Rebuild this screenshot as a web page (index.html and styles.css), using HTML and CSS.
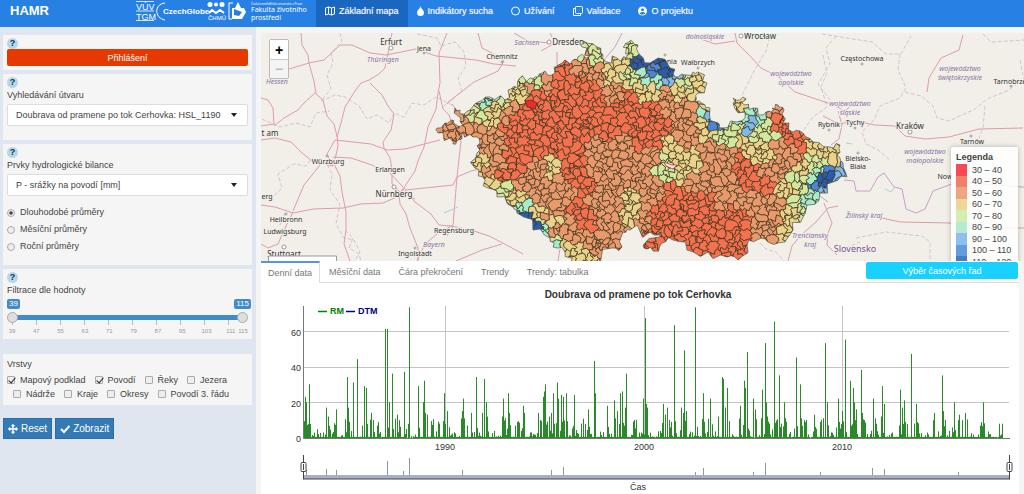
FILE: index.html
```html
<!DOCTYPE html>
<html lang="cs">
<head>
    <meta charset="UTF-8">
    <meta name="viewport" content="width=device-width, initial-scale=1.0">
    <title>HAMR</title>
    <link rel="stylesheet" href="styles.css">
</head>
<body>

<header class="navbar">
    <a class="brand" href="#">HAMR</a>
    <svg class="logos" width="180" height="24" viewBox="0 0 180 24" fill="none" stroke="#fff" aria-label="Partneři">
        <path d="M0 1.500h18M0 11h18M0 20.500h18" stroke-width=".8"/>
        <g fill="#fff" stroke="none">
            <text x="0" y="10" font-size="9">VÚV</text>
            <text x="0" y="20" font-size="9">TGM</text>
            <text x="27" y="14" font-size="8" font-weight="bold">CzechGlobe</text>
            <text x="72" y="20" font-size="6">ČHMÚ</text>
        </g>
        <path d="M29 3C18 4 18 18 29 20"/>
        <g fill="#fff" stroke="none"><circle cx="74" cy="4.500" r="2.500"/><circle cx="80" cy="4.500" r="2"/><circle cx="86" cy="4.500" r="2.500"/></g>
        <path d="M73 13l3-3 4 3 4-3 4 3" stroke-width="2"/>
        <path d="M97 3h-4v16h3"/>
        <path d="M96 8h3l3-6 3 6h3l2 4-4 7H96z" fill="#fff" stroke="none"/>
        <path d="M98 9l8 3-3 4-5-1z" fill="#2780e3" stroke="none"/>
        <g class="faculty" fill="#fff" stroke="none">
            <text x="115" y="5" font-size="3">Česká zemědělská univerzita v Praze</text>
            <text x="115" y="12" font-size="7">Fakulta životního</text>
            <text x="115" y="20" font-size="7">prostředí</text>
        </g>
    </svg>
    <nav class="menu">
        <a class="active" href="#">
            <svg width="10" height="10" viewBox="0 0 10 10" fill="none" stroke="currentColor"><path d="M.5 2l3-1 3 1 3-1v7l-3 1-3-1-3 1zM3.500 1v7M6.500 2v7"/></svg>
            Základní mapa
        </a>
        <a href="#">
            <svg width="7" height="10" viewBox="0 0 7 10" fill="currentColor"><path d="M3.500 0C4 3 7 4 7 6.500a3.500 3.500 0 0 1-7 0C0 4 3 3 3.500 0z"/></svg>
            Indikátory sucha
        </a>
        <a href="#">
            <svg width="9" height="10" viewBox="0 0 9 10" fill="none" stroke="currentColor"><circle cx="4.500" cy="5" r="4"/></svg>
            Užívání
        </a>
        <a href="#">
            <svg width="10" height="10" viewBox="0 0 10 10" fill="none" stroke="currentColor"><rect x="2.500" y=".5" width="7" height="7" rx="1"/><path d="M2 2.500H.5v7h7V8"/></svg>
            Validace
        </a>
        <a href="#">
            <svg width="9" height="10" viewBox="0 0 9 10"><circle cx="4.500" cy="5" r="4.500" fill="currentColor"/><circle cx="4.500" cy="3.800" r="1.500" fill="#2780e3"/><path d="M1.800 7.500C2.500 5.500 6.500 5.500 7.200 7.500 6 9 3 9 1.800 7.500z" fill="#2780e3"/></svg>
            O projektu
        </a>
    </nav>
</header>

<div class="page">
    <form class="sidebar">
        <section class="well">
            <button type="button" class="help">?</button>
            <button type="button" class="login">Přihlášení</button>
        </section>

        <section class="well">
            <button type="button" class="help">?</button>
            <label class="title" for="utvar">Vyhledávání útvaru</label>
            <div class="picker">
                <select id="utvar"><option>Doubrava od pramene po tok Cerhovka: HSL_1190</option></select>
            </div>
        </section>

        <section class="well">
            <button type="button" class="help">?</button>
            <label class="title" for="prvek">Prvky hydrologické bilance</label>
            <div class="picker">
                <select id="prvek"><option>P - srážky na povodí [mm]</option></select>
            </div>
            <div class="radios">
                <label><input type="radio" name="obdobi" checked>Dlouhodobé průměry</label>
                <label><input type="radio" name="obdobi">Měsíční průměry</label>
                <label><input type="radio" name="obdobi">Roční průměry</label>
            </div>
        </section>

        <section class="well">
            <button type="button" class="help">?</button>
            <div class="title">Filtrace dle hodnoty</div>
            <div class="slider">
                <div class="values"><output>39</output><output>115</output></div>
                <div class="track">
                    <input type="range" min="39" max="115" value="39" aria-label="Od">
                    <input type="range" min="39" max="115" value="115" aria-label="Do">
                </div>
                <div class="ticks"></div>
                <div class="scale">
                    <span>39</span><span>47</span><span>55</span><span>63</span><span>71</span><span>79</span><span>87</span><span>95</span><span>103</span><span>111</span><span>115</span>
                </div>
            </div>
        </section>

        <section class="well layers">
            <div class="title">Vrstvy</div>
            <div class="checks">
                <label><input type="checkbox" checked>Mapový podklad</label>
                <label><input type="checkbox" checked>Povodí</label>
                <label><input type="checkbox">Řeky</label>
                <label><input type="checkbox">Jezera</label>
            </div>
            <div class="checks second">
                <label><input type="checkbox">Nádrže</label>
                <label><input type="checkbox">Kraje</label>
                <label><input type="checkbox">Okresy</label>
                <label><input type="checkbox">Povodí 3. řádu</label>
            </div>
        </section>

        <div class="actions">
            <button type="button">
                <svg width="10" height="10" viewBox="0 0 10 10" fill="none" stroke="currentColor" stroke-width="1.300"><path d="M5 1v8M1 5h8M3.500 2.200L5 .8l1.500 1.400M3.500 7.800L5 9.200l1.500-1.400M2.200 3.500L.8 5l1.400 1.500M7.800 3.500L9.200 5 7.800 6.500"/></svg>
                Reset
            </button>
            <button type="button">
                <svg width="10" height="10" viewBox="0 0 10 10" fill="none" stroke="currentColor" stroke-width="2"><path d="M1 5l3 3 5.500-6"/></svg>
                Zobrazit
            </button>
        </div>
    </form>

    <main class="content">
        <div class="map">
            <svg id="map" viewBox="261 33 763 228" preserveAspectRatio="xMinYMin slice" aria-label="Mapa povodí">
                <g class="borders">
                    <path d="M340 33l2 8-11 12 2 10-6 12 4 14-10 12 14-6 10 2 14 9 8 13 10-4 12 8 5-10 10 4 8-14 12 2 12-8 16 8"/>
                    <path d="M417 34l20 4 4 8 14-4 9 10 2 14-8 12 4 14-12 8-8 8"/>
                    <path d="M270 200l12-12-4-14 16-10 12 2 6-8 14 4 6 12-2 16 10 14-4 20 8 14 10 2 6 12-7 12 2 10"/>
                    <path d="M262 119l18 8 16-4 14 4 6-14 14-2"/>
                    <path d="M836 36l-10 12 4 16-12 20 12 16M822 34l50 8 14 12 15 0 10-18M900 54l-2 16 8 18-6 10-20 8-6 14-12 12 4 12 12 6 12 10"/>
                    <path d="M905 92l16 4 12 10 4 12 12 3 26-12 12-10 20-8 17-12M985 106l-2 22-8 20M1020 60l4 20M983 34l8 8 33-2"/>
                    <path d="M742 95l12-24 12-20 5-18M823 55l4 18-6 14 6 20-14 10-10 14M856 238l30-6 36 4 8 6 0 19M760 243l6 6 10 3 8 9M846 248l14-6"/>
                    <path d="M345 230l8 8-4 10 10 6 2 7"/>
                </g>
                <g class="roads">
                    <path d="M301 33l1 12 6 10 1 8 15-3 16-15 12 0 18 8 16 2 30-6 20 7 40 4 18 4 22 2M309 63l5 18 2 13 7 6 4 16 7 8 3 12 1 10-4 18 6 12 2 16 4 20 0 18-2 14 6 17"/>
                    <path d="M289 69l20-6M261 98l7 2 5 8 1 16-13 2M274 126l10-8 14-8 6-7 12-11M261 140l14-2 16 4 10 10 12 10 20 4-6-12 8-14 36 4 16 6 18-1 35-9M337 137l4-14 4-16 10-16 6-8 8-3 10-6 6-6 5-24 2-11M370 83l12 12 6 11 6 8-3 16-8 12 1 6 6 10 2 12 0 14 8 8 15 7"/>
                    <path d="M447 33l-8 20 1 30-2 10-2 16-8 18-4 20-6 14-3 10-10 15-6 8 1 10 6 10 4 14 8 20 0 13M333 157l18 1 18 6 20 8 14 15M320 165l-16 20-11 26M261 205l14 2 18 6 20-4 30-1 18-4 22-1 14-6 8-9M293 212l-8 16-7 16-10 4-7-4"/>
                    <path d="M405 190l20-2 28-3 4-8 14-6 20-4M405 190l10 12 16 12 8 11 12 1 20 4 18 6 12 6 22 12M457 177l4-36-8-14-4-12-6-6-4-18M457 177l-2 24-2 24-16 9-12 10-8 17M502 244l-20 6-26 11M453 226l-6 10"/>
                    <path d="M478 33l4 15 10 5 12 8-6 10-24 11-18 14-9 8M514 33l14 8 22 2M557 52l0 12 2 8M550 33l5 10-14 8M558 261l2-12"/>
                    <path d="M735 33l2 10 14 14 10 11 16 8 18 16 24 8 12 4 14 7 11-10M838 111l4 14-3 14-8 6M823 116l16 8 16-3 20 4 20 1 10 10 20 3 24-2 30-8 44-1"/>
                    <path d="M963 35l-4 15-18 8-12 20-2 14M735 41l-20 3-17-6M838 206l-10 2-12 14-16 14-8 10-4 15M824 203l8 20-4 10-1 12 10 10M882 218l18 4 50 1 24 5 50 0"/>
                </g>
                <g class="frontier">
                    <path d="M622 33l-7 14-12 14M452 104l6 8 4 10M820 196l8 6M844 180l10 1 2 10 14 0 8-14 6-4 10 14 8 2 4 20 10 4 9-4 8-18 16-6 10-3 76 6"/>
                </g>
                <g class="water"><path d="M885 189l6 3 4-5M846 143l6 1M280 225l5-12M444 213l14-6"/></g>
                <g class="dots">
                    <circle cx="391" cy="48" r="2"/><circle cx="424" cy="53" r="1"/><circle cx="502" cy="62" r="1"/><circle cx="327" cy="156" r="1"/>
                    <circle cx="394" cy="187" r="2"/><circle cx="284" cy="247" r="2"/><circle cx="415" cy="248" r="1"/><circle cx="549" cy="42" r="2"/>
                    <circle cx="741" cy="36" r="2"/><circle cx="910" cy="132" r="2"/><circle cx="862" cy="64" r="1"/><circle cx="971" cy="136" r="1"/>
                    <circle cx="1011" cy="86" r="1"/><circle cx="858" cy="153" r="1"/><circle cx="665" cy="55" r="1"/><circle cx="698" cy="68" r="1"/>
                    <circle cx="855" cy="128" r="1"/><circle cx="829" cy="130" r="1"/><circle cx="286" cy="214" r="1"/>
                </g>
                <g class="places">
                    <g class="region">
                        <text x="383" y="62">Thüringen</text><text x="277" y="84">Hessen</text><text x="434" y="247">Bayern</text>
                        <text x="527" y="45">Sachsen</text><text x="705" y="39">dolnośląskie</text>
                        <text x="791" y="76">województwo</text><text x="791" y="85">opolskie</text>
                        <text x="850" y="106">województwo</text><text x="850" y="115">śląskie</text>
                        <text x="960" y="71">województwo</text><text x="960" y="80">świętokrzyskie</text>
                        <text x="925" y="154">województwo</text><text x="925" y="163">małopolskie</text>
                        <text x="864" y="218">Žilinský kraj</text><text x="810" y="238">Trenčiansky</text><text x="810" y="247">kraj</text>
                    </g>
                    <g class="city">
                        <text x="391" y="45">Erfurt</text><text x="394" y="197">Nürnberg</text><text x="284" y="257">Stuttgart</text>
                        <text x="568" y="45">Dresden</text><text x="760" y="39">Wrocław</text><text x="910" y="129">Kraków</text>
                        <text x="270" y="136">t am</text>
                    </g>
                    <g class="town">
                        <text x="424" y="51">Jena</text><text x="502" y="59">Chemnitz</text><text x="328" y="164">Würzburg</text>
                        <text x="390" y="172">Erlangen</text><text x="286" y="222">Heilbronn</text><text x="285" y="234">Ludwigsburg</text>
                        <text x="454" y="233">Regensburg</text><text x="415" y="256">Ingolstadt</text><text x="267" y="199">erg</text>
                        <text x="666" y="64">Jelenia</text><text x="698" y="65">Wałbrzych</text><text x="862" y="61">Częstochowa</text>
                        <text x="829" y="127">Rybnik</text><text x="855" y="125">Tychy</text><text x="858" y="161">Bielsko-</text><text x="858" y="169">Biała</text>
                        <text x="972" y="144">Tarnów</text><text x="1010" y="84">Tarnobrze</text><text x="945" y="179">Now</text>
                    </g>
                    <text class="country" x="855" y="252">Slovensko</text>
                </g>
                <g id="basins"></g>
                <path class="scalebar" d="M268.500 262v-6h68v6"/>
            </svg>
            <div class="zoom">
                <button type="button" aria-label="Přiblížit">+</button>
                <button type="button" aria-label="Oddálit" disabled>−</button>
            </div>
            <div class="legend">
                <strong>Legenda</strong>
                <ul>
                    <li class="c0">30 – 40</li>
                    <li class="c1">40 – 50</li>
                    <li class="c2">50 – 60</li>
                    <li class="c3">60 – 70</li>
                    <li class="c4">70 – 80</li>
                    <li class="c5">80 – 90</li>
                    <li class="c6">90 – 100</li>
                    <li class="c7">100 – 110</li>
                    <li class="c8">110 – 120</li>
                </ul>
            </div>
        </div>

        <div class="panel">
            <div class="tabs">
                <a class="active" href="#">Denní data</a>
                <a href="#">Měsíční data</a>
                <a href="#">Čára překročení</a>
                <a href="#">Trendy</a>
                <a href="#">Trendy: tabulka</a>
                <button type="button" class="series">Výběr časových řad</button>
            </div>
            <svg id="chart" viewBox="261 283 758 211" aria-label="Denní data">
                <text class="heading" x="638" y="298">Doubrava od pramene po tok Cerhovka</text>
                <path class="grid" d="M303 331.500h706M303 367.500h706M303 402.500h706M445.500 306v132M644.500 306v132M842.500 306v132"/>
                <path class="axis" d="M303.500 306v132.500H1010"/>
                <path id="bars" class="bars"/>
                <g class="labels">
                    <text class="end" x="301" y="336">60</text><text class="end" x="301" y="371">40</text>
                    <text class="end" x="301" y="407">20</text><text class="end" x="301" y="442">0</text>
                    <text x="445" y="450">1990</text><text x="644" y="450">2000</text><text x="842" y="450">2010</text>
                    <text x="638" y="490">Čas</text>
                </g>
                <path d="M318 311.500h9" stroke="#008000" stroke-width="1.500"/>
                <text class="key" x="330" y="314" fill="#008000">RM</text>
                <path d="M346 311.500h9" stroke="#000080" stroke-width="1.500"/>
                <text class="key" x="358" y="314" fill="#000080">DTM</text>
                <path id="overview" class="overview"/>
                <rect x="303" y="475" width="706" height="4" fill="#a8b1c4"/>
                <path d="M303 479h707" stroke="#445" stroke-width="1"/>
                <g class="handle">
                    <path d="M303.500 455v24M1009.500 455v24"/>
                    <rect x="301" y="462.500" width="5" height="9" rx="1"/><rect x="1007" y="462.500" width="5" height="9" rx="1"/>
                    <path d="M303.500 464v6M1009.500 464v6"/>
                </g>
            </svg>
        </div>
    </main>
</div>

<script src="script.js"></script>
</body>
</html>
```
FILE: styles.css
```css
* {
    box-sizing: border-box;
}
body {
    margin: 0;
    min-height: 100vh;
    display: flex;
    flex-direction: column;
    font-family: "Liberation Sans", Arial, sans-serif;
    font-size: 9px;
    line-height: 12px;
    color: #444;
    background: #f4f5f6;
}
button, select, input {
    font: inherit;
    margin: 0;
}

/* top bar */
.navbar {
    display: flex;
    align-items: flex-start;
    height: 27px;
    background: #2780e3;
    color: #fff;
}
.navbar a {
    color: #fff;
    text-decoration: none;
}
.brand {
    width: 126px;
    padding: 5px 0 0 10px;
    font-size: 13px;
    font-weight: bold;
}
.logos {
    margin-left: 10px;
}
.faculty {
    font-family: "Noto Sans", sans-serif;
}
.menu {
    display: flex;
    height: 100%;
}
.menu a {
    display: flex;
    align-items: center;
    gap: 4px;
    padding: 0 9px 6px;
    font-size: 9px;
    text-shadow: 0 0 1px rgba(255, 255, 255, 0.5);
}
.menu a.active {
    background: #1967be;
}

.page {
    flex: 1;
    display: grid;
    grid-template-columns: 25% 1fr;
}

/* sidebar */
.sidebar {
    display: flex;
    flex-direction: column;
    gap: 4px;
    padding: 8px 4px 8px 3px;
    background: #dfe6f0;
}
.well {
    padding: 3px 4px 4px;
    background: #f5f5f5;
}
.help {
    display: block;
    width: 11px;
    height: 11px;
    padding: 0;
    border: 0;
    border-radius: 50%;
    background: #b5d8e8;
    color: #135;
    font-size: 9px;
    font-weight: bold;
    line-height: 11px;
}
.login {
    display: block;
    width: 100%;
    height: 17px;
    padding: 0;
    border: 0;
    border-radius: 2px;
    background: #e63900;
    color: #fff;
}
.title {
    display: block;
    line-height: 14px;
}
.picker {
    position: relative;
    margin: 2px 0 10px;
}
.picker::after {
    content: "";
    position: absolute;
    right: 11px;
    top: 9px;
    border: 3px solid transparent;
    border-top: 4px solid #222;
    border-bottom: 0;
}
.picker select {
    display: block;
    width: 100%;
    height: 22px;
    padding: 0 8px;
    border: 1px solid #ddd;
    border-radius: 2px;
    background: #fff;
    color: #444;
    appearance: none;
}
.radios {
    display: grid;
    margin-top: -2px;
    padding-bottom: 6px;
}
.radios label {
    display: flex;
    align-items: center;
    gap: 5px;
    line-height: 17px;
}
input[type="radio"], input[type="checkbox"] {
    appearance: none;
    width: 8px;
    height: 8px;
    border: 1px solid #aaa;
    background: #eee;
}
input[type="radio"] {
    border-radius: 50%;
}
input[type="radio"]:checked {
    background: radial-gradient(#444 30%, #eee 50%);
}
input[type="checkbox"] {
    border-radius: 1px;
}
input[type="checkbox"]:checked::after {
    content: "";
    display: block;
    width: 3px;
    height: 6px;
    margin: -1px 0 0 2px;
    border: solid #222;
    border-width: 0 1px 1px 0;
    transform: rotate(40deg);
}

/* value slider */
.values {
    display: flex;
    justify-content: space-between;
    margin: 2px -3px 0 0;
}
.values output {
    padding: 0 2px;
    border-radius: 2px;
    background: #428bca;
    color: #fff;
    font-size: 8px;
    line-height: 10px;
}
.track {
    position: relative;
    height: 5px;
    margin: 6px 5px 0;
    background: #428bca;
}
.track input {
    position: absolute;
    left: -5px;
    top: -3px;
    width: calc(100% + 10px);
    height: 11px;
    appearance: none;
    background: none;
    pointer-events: none;
}
.track input::-webkit-slider-thumb {
    appearance: none;
    width: 11px;
    height: 11px;
    border: 1px solid #aaa;
    border-radius: 50%;
    background: #dedede;
    pointer-events: auto;
}
.ticks {
    height: 5px;
    margin: 0 5px;
    background: repeating-linear-gradient(90deg, #bbb 0 1px, transparent 1px 24px);
}
.scale {
    display: grid;
    grid-template-columns: repeat(9, 2fr) 1fr 0;
    margin: 2px 5px 0;
    color: #999;
    font-size: 6px;
    line-height: 8px;
}
.scale span {
    width: 20px;
    margin-left: -10px;
    text-align: center;
}

.layers {
    margin-top: 11px;
}
.checks {
    display: flex;
    gap: 9px;
    margin-top: 2px;
}
.checks.second {
    margin: 0 0 0 6px;
}
.checks label {
    display: flex;
    align-items: center;
    gap: 5px;
    line-height: 14px;
}
.actions {
    display: flex;
    gap: 3px;
    margin-top: 9px;
}
.actions button {
    display: flex;
    align-items: center;
    gap: 3px;
    height: 21px;
    padding: 0 4px;
    border: 1px solid #2e6da4;
    background: #337ab7;
    color: #fff;
    font-size: 10px;
}

/* map */
.content {
    display: flex;
    flex-direction: column;
    min-width: 0;
    padding: 6px 0 0 5px;
}
.map {
    position: relative;
    flex: 1;
    min-height: 228px;
    overflow: hidden;
    background: #f2efe9;
}
#map {
    position: absolute;
    width: 100%;
    height: 100%;
}
.borders, .roads, .frontier, .water {
    fill: none;
    stroke-linejoin: round;
}
.borders {
    stroke: #d5c3d0;
    stroke-dasharray: 4 2;
}
.roads {
    stroke: #dd9cac;
}
.frontier {
    stroke: #c8a0cc;
}
.water {
    stroke: #a5d3da;
}
#basins path {
    stroke: #3d3018;
    stroke-width: .7;
}
#basins .outline {
    fill: none;
    stroke: #555;
}
.places {
    font-family: "Noto Sans", sans-serif;
    text-anchor: middle;
    fill: #333;
    stroke: #f2efe9;
    stroke-width: 2;
    paint-order: stroke;
}
.town {
    font-size: 7px;
}
.city {
    font-size: 8px;
}
.region {
    font-size: 7px;
    font-style: italic;
    fill: #8a72a5;
}
.country {
    font-size: 9px;
    fill: #7a5494;
}
.dots {
    fill: #fff;
    stroke: #777;
    stroke-width: .7;
}
.scalebar {
    fill: #fff;
    stroke: #999;
}
.zoom {
    position: absolute;
    left: 8px;
    top: 6px;
    border: 1px solid #bbb;
    border-radius: 2px;
}
.zoom button {
    display: block;
    width: 18px;
    height: 19px;
    padding: 0;
    border: 0;
    background: #fff;
    color: #000;
    font-size: 14px;
    font-weight: bold;
}
.zoom button:disabled {
    border-top: 1px solid #ccc;
    background: #f4f4f4;
    color: #bbb;
}
.legend {
    position: absolute;
    right: 6px;
    top: 114px;
    width: 67px;
    padding: 4px 5px;
    border-radius: 2px;
    background: rgba(255, 255, 255, 0.85);
    box-shadow: 0 0 5px rgba(0, 0, 0, 0.25);
}
.legend strong {
    display: block;
}
.legend ul {
    margin: 1px 0 0;
    padding: 0;
    list-style: none;
}
.legend li {
    padding-left: 5px;
    border-left: 11px solid;
    white-space: nowrap;
}
.legend li:nth-child(even) {
    line-height: 11px;
}
.legend .c0 { border-color: #fb4856; }
.legend .c1 { border-color: #f1806b; }
.legend .c2 { border-color: #eda67f; }
.legend .c3 { border-color: #ebd898; }
.legend .c4 { border-color: #d4eeb0; }
.legend .c5 { border-color: #b4ead0; }
.legend .c6 { border-color: #8ec0ed; }
.legend .c7 { border-color: #649ddf; }
.legend .c8 { border-color: #477cc7; }

/* charts */
.panel {
    margin-right: 5px;
    background: #fff;
}
.tabs {
    display: flex;
    height: 22px;
    border-bottom: 1px solid #ddd;
}
.tabs a {
    height: 22px;
    padding: 4px 9px 0;
    border-top: 1px solid transparent;
    color: #777;
    text-decoration: none;
}
.tabs a.active {
    padding: 4px 7px 0;
    border-top: 2px solid #5b93d6;
    border-right: 1px solid #ddd;
    background: #fff;
}
.series {
    width: 152px;
    height: 17px;
    margin: 1px 1px 0 auto;
    padding: 0;
    border: 0;
    border-radius: 2px;
    background: #19d1ff;
    color: #fff;
}
#chart {
    display: block;
    width: 100%;
}
.heading {
    font-size: 10px;
    font-weight: bold;
    text-anchor: middle;
    fill: #333;
}
.grid {
    stroke: #c4c4c4;
}
.axis {
    fill: none;
    stroke: #777;
}
.bars {
    stroke: #2a8a2a;
}
.labels {
    font-size: 9px;
    text-anchor: middle;
    fill: #333;
}
.labels .end {
    text-anchor: end;
}
.key {
    font-size: 9px;
    font-weight: bold;
}
.overview {
    stroke: #8b93ad;
}
.handle {
    fill: #fff;
    stroke: #444;
}
```
FILE: script.js
```javascript
const colors = ['#ee2b30', '#f4714f', '#e99a6c', '#e9d28a', '#d3e89f', '#a5ecc9', '#7fb9ea', '#4b87d6', '#2a5cae'];

const border = [
    437,128, 445,123, 452,120, 455,124, 463,125, 461,118, 455,108, 460,110, 465,118, 470,110, 478,102, 490,97, 505,100,
    508,90, 518,88, 519,79, 530,78, 538,77, 545,71, 555,73, 562,63, 573,60, 578,57, 590,56, 582,47, 583,41, 597,47,
    603,55, 607,62, 617,58, 627,58, 630,54, 623,47, 627,43, 638,45, 640,55, 650,63, 670,68, 675,77, 685,75, 693,72,
    700,73, 707,83, 698,93, 695,102, 705,105, 710,108, 718,123, 722,128, 737,122, 745,112, 733,103, 733,98, 743,97,
    745,105, 753,108, 763,115, 773,113, 772,108, 778,105, 784,110, 783,123, 793,132, 803,133, 813,142, 830,147,
    840,145, 837,155, 843,163, 847,177, 833,182, 820,193, 807,205, 803,217, 793,230, 785,242, 768,242, 757,240,
    747,245, 738,260, 727,257, 708,252, 687,250, 673,240, 662,243, 653,251, 644,248, 645,243, 660,237, 662,232,
    650,232, 630,230, 623,232, 622,247, 612,248, 600,264, 570,264, 565,252, 553,247, 550,238, 533,230, 517,213,
    513,207, 497,197, 488,188, 483,177, 475,168, 477,153, 480,143, 473,137, 463,132, 458,140, 453,144, 450,138, 438,133
];

// sample points for each colour class, x,y pairs
const zones = [
    [],
    [540,95, 560,85, 590,90, 575,110, 530,117, 515,125, 525,145, 560,130, 600,110, 625,100, 645,110, 660,125, 640,137,
     545,150, 575,165, 580,185, 505,175, 515,160, 580,210, 750,160, 745,175, 760,185, 790,135, 670,205, 690,215, 710,235,
     660,215, 650,245, 690,240, 730,245, 740,220, 700,200, 780,126, 555,110, 585,130, 610,130, 585,222, 565,75, 740,235,
     530,105, 545,135, 510,140, 620,115, 570,150],
    [445,130, 475,125, 485,135, 490,150, 495,165, 580,65, 600,72, 615,90, 540,170, 555,185, 530,190, 550,210, 575,230,
     600,180, 620,150, 610,220, 640,180, 650,160, 660,98, 680,110, 690,140, 710,150, 720,170, 700,185, 735,195, 775,200,
     770,220, 790,160, 780,145, 590,245, 775,113, 600,150, 770,170, 725,155, 640,205, 595,205, 565,195, 500,140, 530,92,
     545,83, 760,232, 755,205, 690,120, 505,115, 620,185, 615,205, 555,232, 640,222, 650,190],
    [700,80, 680,92, 655,90, 635,85, 620,67, 607,70, 490,120, 495,107, 520,92, 478,160, 492,190, 515,200, 535,213,
     550,225, 563,240, 570,255, 550,165, 675,155, 685,165, 627,196, 632,215, 710,135, 700,118, 762,150, 765,163,
     820,150, 835,152, 800,170, 790,190, 785,215, 790,235, 738,102, 705,107, 590,260, 745,145, 480,110, 510,95],
    [590,50, 600,60, 632,48, 530,83, 543,79, 630,75, 685,82, 720,135, 735,130, 770,125, 798,185, 812,163, 536,220,
     556,238, 478,113, 500,198, 790,205, 665,165, 770,138, 755,135, 505,95],
    [487,103, 492,104, 545,73, 640,78, 655,82, 742,120, 760,118, 703,115, 560,243, 815,175, 546,229, 812,195, 520,207],
    [645,72, 750,127, 670,78, 840,170, 708,113, 837,180, 820,187],
    [650,72, 714,120, 828,170, 813,188, 518,213],
    [638,62, 648,67, 660,72, 670,72, 825,178, 524,219, 532,227]
];

function hash(a, b) {
    const s = Math.sin(a * 12.9898 + b * 78.233) * 43758.5453;
    return s - Math.floor(s);
}

// replaces a straight edge by a crooked one, the same from both sides
function crook(p, q, size) {
    const flip = p[0] > q[0] || (p[0] === q[0] && p[1] > q[1]);
    const a = flip ? q : p;
    const b = flip ? p : q;
    const points = [0.33, 0.66].map((t, i) => {
        const k = (hash(a[0] + b[0] + i, a[1] + b[1]) - 0.5) * size;
        return [a[0] + (b[0] - a[0]) * t - (b[1] - a[1]) * k, a[1] + (b[1] - a[1]) * t + (b[0] - a[0]) * k];
    });
    return flip ? points.reverse() : points;
}

function toPath(poly, size) {
    const out = [];
    poly.forEach((p, i) => {
        out.push(p, ...crook(p, poly[(i + 1) % poly.length], size));
    });
    return 'M' + out.map(p => p[0].toFixed(1) + ' ' + p[1].toFixed(1)).join('L') + 'z';
}

function classAt(x, y) {
    let best = 1e9;
    let found = 2;
    zones.forEach((list, value) => {
        for (let i = 0; i < list.length; i += 2) {
            const d = Math.hypot(x - list[i], y - list[i + 1]) + hash(x + i, y) * 4;
            if (d < best) {
                best = d;
                found = value;
            }
        }
    });
    return found;
}

function drawBasins() {
    const step = 7;
    const seeds = [];
    for (let y = 36; y < 268; y += step) {
        for (let x = 432; x < 855; x += step) {
            if (hash(x, y + 5) < 0.08) continue;
            seeds.push([x + (hash(x, y) - 0.5) * 14, y + (hash(y, x) - 0.5) * 14]);
        }
    }
    let cells = '';
    seeds.forEach(s => {
        let cell = [[s[0] - 20, s[1] - 20], [s[0] + 20, s[1] - 20], [s[0] + 20, s[1] + 20], [s[0] - 20, s[1] + 20]];
        seeds.forEach(o => {
            if (o === s || Math.abs(o[0] - s[0]) > 30 || Math.abs(o[1] - s[1]) > 30) return;
            const nx = o[0] - s[0];
            const ny = o[1] - s[1];
            const c = (o[0] * o[0] + o[1] * o[1] - s[0] * s[0] - s[1] * s[1]) / 2;
            const next = [];
            cell.forEach((p, i) => {
                const q = cell[(i + 1) % cell.length];
                const dp = p[0] * nx + p[1] * ny - c;
                const dq = q[0] * nx + q[1] * ny - c;
                if (dp <= 0) next.push(p);
                if (dp * dq < 0) {
                    const t = dp / (dp - dq);
                    next.push([p[0] + (q[0] - p[0]) * t, p[1] + (q[1] - p[1]) * t]);
                }
            });
            cell = next;
        });
        cell = cell.map(p => [Math.round(p[0] * 10) / 10, Math.round(p[1] * 10) / 10]);
        cells += `<path d="${toPath(cell, 0.8)}" fill="${colors[classAt(s[0], s[1])]}"/>`;
    });
    const outline = [];
    for (let i = 0; i < border.length; i += 2) {
        outline.push([border[i], border[i + 1]]);
    }
    const d = toPath(outline, 0.7);
    document.getElementById('basins').innerHTML = `
        <clipPath id="country"><path d="${d}"/></clipPath>
        <g clip-path="url(#country)">${cells}</g>
        <path class="outline" d="${d}"/>
        <path d="M525 101l6-1 6 3-2 6-8-2z" fill="${colors[0]}"/>
        <path d="M664 162l8 3 5 0-4 4-7-3z" style="fill:#f6e6e0;stroke:#b3262b"/>
    `;
}

// the larger rainfall events: position on the time axis, value
const peaks = [
    305,23, 306,20, 309,30, 317,5, 326,17, 328,12, 336,16, 347,34, 348,17, 353,31, 357,44, 364,29, 366,28, 371,14,
    378,9, 385,61, 387,61, 389,20, 392,36, 397,13, 399,10, 404,37, 409,73, 418,29, 423,20, 424,32, 425,14, 427,13,
    431,7, 439,7, 444,25, 447,15, 462,15, 463,22, 464,11, 467,7, 471,14, 476,34, 482,14, 484,33, 486,20, 487,12,
    502,12, 503,22, 505,11, 508,25, 509,14, 517,9, 523,18, 524,14, 538,14, 543,23, 544,26, 545,30, 549,12, 551,14,
    553,25, 557,31, 558,22, 561,24, 563,23, 566,25, 574,24, 583,9, 588,16, 594,43, 595,25, 607,18, 614,21, 615,11,
    617,15, 620,25, 622,26, 625,17, 626,36, 634,8, 643,22, 645,67, 646,19, 647,17, 663,19, 665,13, 667,17, 669,10,
    674,63, 681,17, 683,14, 684,49, 686,15, 695,73, 703,25, 704,9, 710,22, 718,12, 722,34, 723,33, 725,17, 727,28,
    740,18, 744,32, 745,28, 747,48, 753,22, 755,16, 761,11, 762,27, 765,53, 766,20, 767,12, 774,65, 779,35, 784,20,
    785,11, 786,9, 796,45, 800,30, 801,11, 804,10, 806,10, 814,13, 820,9, 823,11, 825,53, 827,20, 838,22, 839,9,
    842,15, 845,55, 850,32, 853,28, 854,20, 856,16, 861,38, 862,14, 864,10, 873,22, 875,11, 881,12, 882,29, 884,19,
    900,27, 902,17, 904,21, 905,9, 911,47, 916,19, 934,14, 942,35, 943,15, 954,20, 958,10, 959,13, 962,10, 965,14,
    980,7, 983,20, 999,8, 1002,8
];

function drawChart() {
    let bars = '';
    for (let x = 304; x < 1003; x++) {
        // light rain gathers in the weeks round a larger event
        const near = peaks.some((p, i) => i % 2 === 0 && Math.abs(p - x) < 3);
        const v = hash(x, 7) < 0.5 ? 0.6 : hash(x, 9) * (near ? 11 : 4);
        bars += `M${x}.5 438v-${(v * 1.79).toFixed(1)}`;
    }
    for (let i = 0; i < peaks.length; i += 2) {
        bars += `M${peaks[i]}.5 438v-${(peaks[i + 1] * 1.79).toFixed(1)}`;
    }
    document.getElementById('bars').setAttribute('d', bars);

    const high = [306,5, 326,6, 336,5, 387,14, 403,4, 409,17, 462,5, 551,5, 563,8, 695,3, 703,7, 753,3, 765,12, 820,3, 872,7, 884,6, 958,3];
    let line = '';
    for (let i = 0; i < high.length; i += 2) {
        line += `M${high[i]}.5 475v-${high[i + 1]}`;
    }
    document.getElementById('overview').setAttribute('d', line);
}

drawBasins();
drawChart();
```
